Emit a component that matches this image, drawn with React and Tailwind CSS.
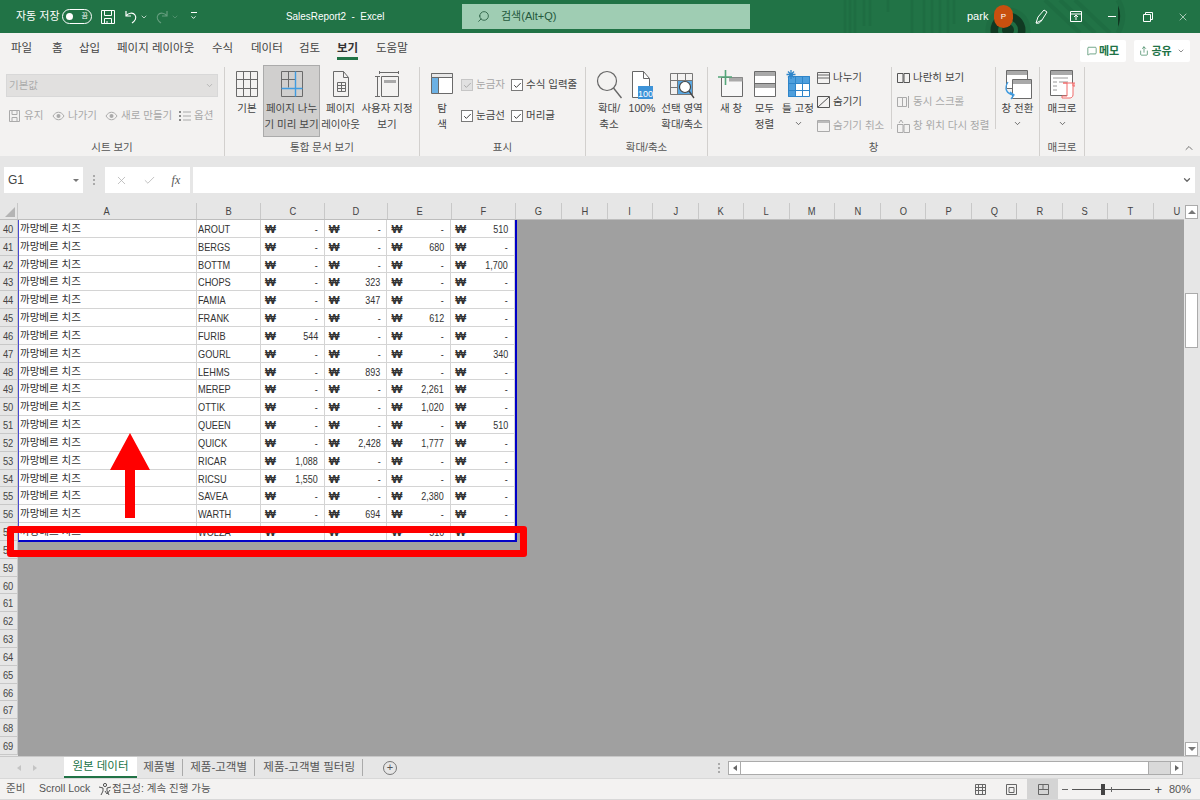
import { ChevronDown, ChevronUp, Search, X, Check, MessageSquare, Share } from "lucide-react";

const KR = "font-['Liberation_Sans','Noto_Sans_CJK_KR','Noto_Sans',sans-serif]";

const tabs = [
  ["파일", 41], ["홈", 27], ["삽입", 38], ["페이지 레이아웃", 95], ["수식", 39],
  ["데이터", 48], ["검토", 38], ["보기", 39], ["도움말", 31],
];
const columns = [
  ["A", 179], ["B", 64], ["C", 64], ["D", 63], ["E", 64], ["F", 64],
  ["G", 46], ["H", 46], ["I", 45], ["J", 46], ["K", 45], ["L", 46], ["M", 45], ["N", 46],
  ["O", 45], ["P", 46], ["Q", 45], ["R", 46], ["S", 45], ["T", 46], ["U", 46],
];
const rows = [
  ["AROUT", "-", "-", "-", "510"],
  ["BERGS", "-", "-", "680", "-"],
  ["BOTTM", "-", "-", "-", "1,700"],
  ["CHOPS", "-", "323", "-", "-"],
  ["FAMIA", "-", "347", "-", "-"],
  ["FRANK", "-", "-", "612", "-"],
  ["FURIB", "544", "-", "-", "-"],
  ["GOURL", "-", "-", "-", "340"],
  ["LEHMS", "-", "893", "-", "-"],
  ["MEREP", "-", "-", "2,261", "-"],
  ["OTTIK", "-", "-", "1,020", "-"],
  ["QUEEN", "-", "-", "-", "510"],
  ["QUICK", "-", "2,428", "1,777", "-"],
  ["RICAR", "1,088", "-", "-", "-"],
  ["RICSU", "1,550", "-", "-", "-"],
  ["SAVEA", "-", "-", "2,380", "-"],
  ["WARTH", "-", "694", "-", "-"],
  ["WOLZA", "", "", "510", ""],
];
const rowNumbers = Array.from({ length: 30 }, (_, i) => 40 + i);

const Icon = ({ w = 32, h = 32, className = "", children }) => (
  <svg width={w} height={h} viewBox={`0 0 ${w} ${h}`} fill="none" className={`shrink-0 ${className}`}>
    {children}
  </svg>
);

function BigButton({ width, icon, label, active, chevron }) {
  return (
    <div
      className={`flex h-[72px] flex-col items-center text-[10.5px] leading-[16px] text-[#444] ${
        active ? "-mt-[2px] border border-[#ababab] bg-[#d0cfce] pt-[4px]" : "pt-[3px]"
      }`}
      style={{ width }}
    >
      <div className="flex h-[28px] items-start justify-center">{icon}</div>
      <div className="mt-[2px] text-center whitespace-pre">{label}</div>
      {chevron && <ChevronDown size={9} strokeWidth={2} className="mt-[3px]" />}
    </div>
  );
}

function Group({ width, label, children }) {
  return (
    <div className="flex h-[89px] shrink-0 flex-col border-r border-[#d2d0ce]" style={{ width }}>
      <div className="flex h-[72px] items-start">{children}</div>
      <div className="mt-auto pb-[1px] text-center text-[10.5px] leading-[15px] text-[#555]">{label}</div>
    </div>
  );
}

function CheckItem({ label, disabled }) {
  return (
    <div className={`flex h-[16px] items-center gap-[3px] text-[10.5px] whitespace-nowrap ${disabled ? "text-[#a6a6a6]" : "text-[#444]"}`}>
      <span
        className={`flex h-[12px] w-[12px] items-center justify-center border ${
          disabled ? "border-[#c6c6c6] bg-[#e1e1e1]" : "border-[#7a7a7a] bg-white"
        }`}
      >
        <Check size={9} strokeWidth={2.5} color={disabled ? "#a6a6a6" : "#333"} />
      </span>
      {label}
    </div>
  );
}

function SmallItem({ icon, label, disabled, className = "" }) {
  return (
    <div className={`flex h-[22px] items-center gap-[3px] text-[10.5px] whitespace-nowrap ${disabled ? "text-[#a8a8a8]" : "text-[#444]"} ${className}`}>
      {icon}
      {label}
    </div>
  );
}

const GridIcon = () => (
  <Icon w={24} h={28}>
    <path d="M1.5 1.5h21v25h-21zM8.5 1.5v25M15.5 1.5v25M1.5 9.5h21M1.5 18.5h21" stroke="#6a6a6a" />
  </Icon>
);
const BreakIcon = () => (
  <Icon w={24} h={28}>
    <path d="M1.5 1.5h21v25h-21zM8.5 1.5v16M1.5 9.5h14" stroke="#6a6a6a" />
    <path d="M15.5 1.5v25M1.5 18.5h21" stroke="#3f9be0" strokeWidth="1.4" />
  </Icon>
);
const PageIcon = () => (
  <Icon w={20} h={28}>
    <path d="M2.5 1.5h10l5 6v19h-15zM12.5 1.5v6h5" stroke="#6a6a6a" />
    <path d="M6.5 12.5h8v9h-8zM6.5 15.5h8M6.5 18.5h8M10.5 12.5v9" stroke="#6a6a6a" />
  </Icon>
);
const CustomViewIcon = () => (
  <Icon w={26} h={28}>
    <path d="M5.5 1v3M24.5 1v3M6 2.5h18M1 6.5h5M1 26.5h5M3.5 6.5v20" stroke="#6a6a6a" />
    <path d="M7.5 6.5h17v20h-17z" stroke="#6a6a6a" />
    <path d="M10 10h12v3H10z" fill="#a9a9a9" />
  </Icon>
);
const NavIcon = () => (
  <Icon w={24} h={26}>
    <path d="M1.5 3.5h21v20h-21z" stroke="#6a6a6a" fill="#fff" />
    <path d="M1.5 3.5h21v4h-21z" stroke="#6a6a6a" fill="#e8e8e8" />
    <path d="M2 8h6v15H2z" fill="#6cb1e4" />
    <path d="M8.5 8v15" stroke="#6a6a6a" />
  </Icon>
);
const ZoomIcon = () => (
  <Icon w={26} h={30}>
    <circle cx="11" cy="11" r="9.5" stroke="#666" strokeWidth="1.2" />
    <path d="M17.5 18l8 10" stroke="#666" strokeWidth="1.4" />
  </Icon>
);
const HundredIcon = () => (
  <Icon w={26} h={30}>
    <path d="M3.5 1.5h11l6 7v19h-17z" stroke="#666" fill="#fff" />
    <path d="M14.5 1.5v7h6" stroke="#666" />
    <rect x="9" y="16" width="15" height="13" fill="#3d93d8" />
    <text x="16.5" y="26.5" textAnchor="middle" fontSize="9" fill="#fff" fontFamily="Liberation Sans">100</text>
  </Icon>
);
const SelectionZoomIcon = () => (
  <Icon w={26} h={30}>
    <path d="M1.5 3.5h22v21h-22zM1.5 10.5h22M1.5 17.5h22M8.5 3.5v21M16.5 3.5v21" stroke="#777" />
    <path d="M9 11h14v13H9z" fill="#5aa8e2" />
    <circle cx="16" cy="17" r="5.5" stroke="#444" strokeWidth="1.2" fill="#fff" />
    <path d="M20 21l5 7" stroke="#444" strokeWidth="1.3" />
  </Icon>
);
const NewWindowIcon = () => (
  <Icon w={26} h={28}>
    <path d="M3.5 7.5h21v19h-21z" stroke="#6a6a6a" fill="#f7f7f7" />
    <path d="M11 7.5h13.5v4H11z" fill="#a9a9a9" />
    <path d="M7.5 0v15M0 7h14" stroke="#54a679" strokeWidth="1.6" />
  </Icon>
);
const ArrangeIcon = () => (
  <Icon w={24} h={28}>
    <path d="M1.5 1.5h21v25h-21z" stroke="#6a6a6a" fill="#fff" />
    <path d="M2 2h20v4H2zM2 14h20v4H2z" fill="#a9a9a9" />
    <path d="M1.5 13.5h21" stroke="#6a6a6a" />
  </Icon>
);
const FreezeIcon = () => (
  <Icon w={26} h={28}>
    <path d="M3 6h22v21H3z" fill="#fff" />
    <path d="M3 6h22v7H3zM3 13h7v14H3z" fill="#4e9fdd" />
    <path d="M3.5 6.5h21v20h-21zM3.5 13.5h21M3.5 20.5h21M10.5 6.5v20M17.5 6.5v20" stroke="#2f85c9" />
    <path d="M6 0v9M1.5 4.5h9M3 1.5l6 6M9 1.5l-6 6" stroke="#2f85c9" strokeWidth="1.3" />
  </Icon>
);
const SwitchIcon = () => (
  <Icon w={30} h={30}>
    <path d="M3.5 0.5h21v18h-21z" stroke="#6a6a6a" fill="#fff" />
    <path d="M4 1h20v4H4z" fill="#a9a9a9" />
    <path d="M9.5 9.5h19v19h-19z" stroke="#6a6a6a" fill="#fff" />
    <path d="M10 10h18v4H10z" fill="#a9a9a9" />
    <path d="M5 12c-4 6-2 12 6 13M7 22l4 3-3 4" stroke="#3f9be0" strokeWidth="1.3" />
  </Icon>
);
const MacroIcon = () => (
  <Icon w={26} h={30}>
    <path d="M1.5 0.5h22v25h-22z" stroke="#6a6a6a" fill="#fff" />
    <path d="M2 1h21v4H2z" fill="#a9a9a9" />
    <path d="M4 8h15M4 12h4M10 12h9M4 16h4M4 20h4" stroke="#9a9a9a" />
    <path d="M14 13h10v12c0 2-2 3-3 3h-8v-2h5V13zM24 13v3h2v-3z" stroke="#f16a6a" fill="#fff" />
  </Icon>
);
const SmallBox = ({ children }) => (
  <Icon w={13} h={14}>
    {children}
  </Icon>
);

function Ribbon() {
  return (
    <div className="flex h-[91px] bg-[#f3f2f1] pt-[2px] text-[#444]">
      <Group width={225} label="시트 보기">
        <div className="flex w-full flex-col pl-[6px] pt-[7px]">
          <div className="flex h-[23px] w-[212px] items-center justify-between border border-[#d8d8d8] bg-[#e1e0df] pl-[2px] pr-[3px] text-[10.5px] text-[#acacac]">
            기본값
            <ChevronDown size={9} strokeWidth={2} color="#aaa" />
          </div>
          <div className="mt-[8px] flex pl-[2px]">
            <SmallItem className="w-[44px]" disabled label="유지" icon={<SmallBox><path d="M1.5 1.5h10v11h-10zM4 1.5v4h5v-4M4 12.5v-4h5v4" stroke="#aaa" /></SmallBox>} />
            <SmallItem className="w-[53px]" disabled label="나가기" icon={<SmallBox><path d="M1 7c3-5 8-5 11 0-3 5-8 5-11 0z" stroke="#aaa" /><circle cx="6.5" cy="7" r="2" fill="#aaa" /></SmallBox>} />
            <SmallItem className="w-[73px]" disabled label="새로 만들기" icon={<SmallBox><path d="M1 7c3-5 8-5 11 0-3 5-8 5-11 0z" stroke="#aaa" /><circle cx="6.5" cy="7" r="2" fill="#aaa" /></SmallBox>} />
            <SmallItem disabled label="옵션" icon={<SmallBox><path d="M5 3h8M5 7h8M5 11h8" stroke="#aaa" /><path d="M1 2h2v2H1zM1 6h2v2H1zM1 10h2v2H1z" fill="#888" /></SmallBox>} />
          </div>
        </div>
      </Group>
      <Group width={195} label="통합 문서 보기">
        <div className="flex pl-[6px]">
          <BigButton width={32} icon={<GridIcon />} label="기본" />
          <BigButton width={57} active icon={<BreakIcon />} label={"페이지 나누\n기 미리 보기"} />
          <BigButton width={41} icon={<PageIcon />} label={"페이지\n레이아웃"} />
          <BigButton width={52} icon={<CustomViewIcon />} label={"사용자 지정\n보기"} />
        </div>
      </Group>
      <Group width={166} label="표시">
        <div className="flex pl-[10px]">
          <BigButton width={24} icon={<NavIcon />} label={"탐\n색"} />
          <div className="ml-[7px] flex w-[50px] flex-col gap-[15px] pt-[10px]">
            <CheckItem disabled label="눈금자" />
            <CheckItem label="눈금선" />
          </div>
          <div className="flex flex-col gap-[15px] pt-[10px]">
            <CheckItem label="수식 입력줄" />
            <CheckItem label="머리글" />
          </div>
        </div>
      </Group>
      <Group width={122} label="확대/축소">
        <div className="flex pl-[8px]">
          <BigButton width={30} icon={<ZoomIcon />} label={"확대/\n축소"} />
          <BigButton width={36} icon={<HundredIcon />} label="100%" />
          <BigButton width={44} icon={<SelectionZoomIcon />} label={"선택 영역\n확대/축소"} />
        </div>
      </Group>
      <Group width={332} label="창">
        <div className="flex pl-[6px]">
          <BigButton width={34} icon={<NewWindowIcon />} label="새 창" />
          <BigButton width={33} icon={<ArrangeIcon />} label={"모두\n정렬"} />
          <BigButton width={34} icon={<FreezeIcon />} label="틀 고정" chevron />
          <div className="ml-[2px] flex w-[73px] flex-col">
            <SmallItem label="나누기" icon={<SmallBox><path d="M.5 1.5h12v11H.5zM.5 7h12M.5 4h12" stroke="#666" /></SmallBox>} />
            <SmallItem className="mt-[2px]" label="숨기기" icon={<SmallBox><path d="M.5 1.5h12v11H.5zM1 12L12 2" stroke="#555" /></SmallBox>} />
            <SmallItem className="mt-[2px]" disabled label="숨기기 취소" icon={<SmallBox><path d="M.5 1.5h12v11H.5z" stroke="#aaa" /><path d="M1 2h11v2H1z" fill="#bbb" /></SmallBox>} />
          </div>
          <div className="ml-[1px] h-[62px] w-px bg-[#d2d0ce]" />
          <div className="ml-[5px] flex w-[98px] flex-col">
            <SmallItem label="나란히 보기" icon={<SmallBox><path d="M.5 2.5h5.5v9H.5zM7 2.5h5.5v9H7z" stroke="#555" /></SmallBox>} />
            <SmallItem className="mt-[2px]" disabled label="동시 스크롤" icon={<SmallBox><path d="M.5 2.5h5v9h-5zM5.5 2.5h4v9h-4zM11.5 1v12" stroke="#aaa" /></SmallBox>} />
            <SmallItem className="mt-[2px]" disabled label="창 위치 다시 정렬" icon={<SmallBox><path d="M.5 5.5h5.5v8H.5zM7 5.5h5.5v8H7zM2 4l2-3 2 3" stroke="#aaa" /></SmallBox>} />
          </div>
          <div className="h-[62px] w-px bg-[#d2d0ce]" />
          <BigButton width={43} icon={<SwitchIcon />} label="창 전환" chevron />
        </div>
      </Group>
      <Group width={45} label="매크로">
        <BigButton width={44} icon={<MacroIcon />} label="매크로" chevron />
      </Group>
      <div className="flex flex-1 items-end justify-end pb-[2px] pr-[5px]">
        <ChevronUp size={12} strokeWidth={1.6} color="#555" />
      </div>
    </div>
  );
}

function TitleBar() {
  return (
    <div className="relative flex h-[33px] items-center overflow-hidden bg-[#217346] text-[11px] text-white">
      <svg width="320" height="33" className="absolute left-[840px] top-0 opacity-50">
        <path d="M5 33V0M10 33V0M15 33V0M24 0v26M30 0v26M48 0v12M72 33V0M84 33V0M92 33V0M100 33V0M108 33V0M114 0v24" stroke="#1d6840" strokeWidth="2.5" />
        <circle cx="168" cy="30" r="20" stroke="#1d6840" strokeWidth="5" />
        <circle cx="168" cy="30" r="8" stroke="#1d6840" strokeWidth="4" />
        <path d="M205 0L240 33M220 0L255 33M235 0L270 33" stroke="#1d6840" strokeWidth="4" />
        <path d="M278 0c6 10 6 22 0 33" stroke="#1d6840" strokeWidth="5" />
      </svg>
      <span className="relative ml-[16px] w-[46px]">자동 저장</span>
      <div className="relative flex h-[15px] w-[30px] items-center justify-between rounded-full border border-white pl-[3px] pr-[3px] text-[7px]">
        <span className="h-[7px] w-[7px] rounded-full bg-white" />끔
      </div>
      <Icon w={16} h={16} className="relative ml-[8px]">
        <path d="M1.5 1.5h13v13h-13zM4.5 1.5v5h7v-5M4.5 14.5v-5h7v5M7 12v2" stroke="#fff" />
      </Icon>
      <Icon w={14} h={14} className="relative ml-[8px]">
        <path d="M2 1v5h5M2 6c2-3 7-4 9-1s0 6-3 8" stroke="#fff" strokeWidth="1.2" />
      </Icon>
      <ChevronDown size={8} className="relative ml-[2px]" />
      <Icon w={14} h={14} className="relative ml-[7px] opacity-30">
        <path d="M12 1v5H7M12 6C10 3 5 2 3 5s0 6 3 8" stroke="#fff" strokeWidth="1.2" />
      </Icon>
      <ChevronDown size={8} className="relative ml-[2px] opacity-30" />
      <div className="relative ml-[11px] flex flex-col items-center gap-[1px]">
        <span className="h-px w-[6px] bg-white" />
        <ChevronDown size={7} strokeWidth={3} />
      </div>
      <span className="relative ml-[89px] inline-block w-[92px] origin-left scale-x-[0.9] whitespace-pre">{"SalesReport2  -  Excel"}</span>
      <div className="relative ml-[84px] flex h-[25px] w-[288px] items-center bg-[#9fcdb3] pl-[15px] text-[#24593c]">
        <Search size={13} className="-scale-x-100" strokeWidth={1.5} />
        <span className="ml-[11px]">검색(Alt+Q)</span>
      </div>
      <span className="relative ml-[217px] w-[27px]">park</span>
      <div className="relative flex h-[23px] w-[19px] items-center justify-center rounded-full bg-[#c8500f] text-[8px]">P</div>
      <Icon w={16} h={16} className="relative ml-[21px]">
        <path d="M2 14l2-6 6-7 3 2-5 8zM2 14c2 1 4 0 6-3" stroke="#fff" />
      </Icon>
      <Icon w={12} h={11} className="relative ml-[20px]">
        <path d="M.5.5h11v10H.5zM.5 3h11M6 9V4.5M4 6l2-2 2 2" stroke="#fff" />
      </Icon>
      <span className="relative ml-[26px] h-px w-[8px] bg-white" />
      <Icon w={10} h={10} className="relative ml-[27px]">
        <path d="M.5 2.5h7v7h-7zM2.5 2.5v-2h7v7h-2" stroke="#fff" />
      </Icon>
      <X size={12} strokeWidth={1.2} className="relative ml-[24px]" />
    </div>
  );
}

function TabBar() {
  return (
    <div className="flex h-[32px] items-center bg-[#f3f2f1] pl-[11px] text-[11.5px] text-[#444]">
      <div className="flex">
        {tabs.map(([tab, width]) => (
          <span key={tab} className="shrink-0 whitespace-nowrap" style={{ width }}>
            <span className={`relative ${tab === "보기" ? "font-bold text-[#333]" : ""}`}>
              {tab}
              {tab === "보기" && <span className="absolute -bottom-[6px] left-0 right-0 h-[3px] bg-[#217346]" />}
            </span>
          </span>
        ))}
      </div>
      <div className="ml-auto mr-[10px] mt-[4px] flex gap-[8px] font-bold text-[#217346]">
        <div className="flex h-[22px] w-[46px] items-center justify-center gap-[2px] rounded-[2px] bg-white text-[11px]">
          <MessageSquare size={10} strokeWidth={1.5} />
          메모
        </div>
        <div className="flex h-[22px] w-[56px] items-center justify-center gap-[2px] rounded-[2px] bg-white text-[11px]">
          <Share size={10} strokeWidth={1.5} />
          공유
          <ChevronDown size={8} color="#555" className="ml-[3px]" />
        </div>
      </div>
    </div>
  );
}

function FormulaBar() {
  return (
    <div className="flex h-[47px] shrink-0 items-start bg-[#e6e6e6] pt-[11px]">
      <div className="ml-[4px] flex h-[26px] w-[79px] items-center justify-between bg-white pl-[4px] pr-[4px] text-[12px] text-[#444]">
        G1
        <span className="border-x-[3px] border-t-[3px] border-x-transparent border-t-[#777]" />
      </div>
      <div className="ml-[10px] mt-[8px] flex flex-col gap-[2px]">
        <span className="h-[2px] w-[2px] bg-[#aaa]" />
        <span className="h-[2px] w-[2px] bg-[#aaa]" />
        <span className="h-[2px] w-[2px] bg-[#aaa]" />
      </div>
      <div className="ml-[10px] flex h-[26px] w-[85px] items-center justify-around bg-white px-[2px] text-[#b5b5b5]">
        <X size={13} strokeWidth={1.5} />
        <Check size={13} strokeWidth={1.5} />
        <span className="font-['Liberation_Serif',serif] text-[12px] italic text-[#555]">fx</span>
      </div>
      <div className="ml-[3px] flex h-[26px] w-[1002px] items-center justify-end bg-white pr-[3px]">
        <ChevronDown size={10} strokeWidth={3} color="#666" />
      </div>
    </div>
  );
}

function SheetRow({ row, number }) {
  return (
    <div className="flex h-[17.83px] text-[11.5px] text-[#333]">
      <div className="w-[179px] border-b border-r border-[#d4d4d4] pl-[1px] text-[10.5px] leading-[16px] whitespace-nowrap">까망베르 치즈</div>
      <div className="w-[64px] border-b border-r border-[#d4d4d4] pl-[1px] leading-[19px]">
        <span className="inline-block origin-left scale-x-[0.8]">{row[0]}</span>
      </div>
      {row.slice(1).map((value, i) => (
        <div
          key={`${number}-${i}`}
          className={`flex justify-between border-b border-r border-[#d4d4d4] pl-[4px] pr-[6px] leading-[19px] ${i === 1 ? "w-[63px]" : "w-[64px]"}`}
        >
          <span className="font-semibold">₩</span>
          <span className="inline-block origin-right scale-x-[0.78]">{value}</span>
        </div>
      ))}
    </div>
  );
}

function Sheet() {
  return (
    <div className={`flex min-h-0 flex-1 bg-[#e6e6e6] text-[11px] ${KR}`}>
      <div className="flex min-w-0 flex-1 flex-col overflow-hidden">
        <div className="flex h-[16px] shrink-0 text-[#444]">
          <div className="relative h-full w-[18px] shrink-0 border-r border-[#c8c8c8]">
            <span className="absolute bottom-[2px] right-[2px] border-b-[10px] border-l-[10px] border-b-[#b4b4b4] border-l-transparent" />
          </div>
          {columns.map(([name, width]) => (
            <div
              key={name}
              className="shrink-0 border-r border-[#c8c8c8] text-center leading-[16px]"
              style={{ width }}
            >
              <span className="inline-block scale-x-[0.85]">{name}</span>
            </div>
          ))}
        </div>
        <div className="flex min-h-0 flex-1 border-t border-[#bdbdbd]">
          <div className="w-[18px] shrink-0 overflow-hidden text-[#444]">
            {rowNumbers.map((number) => (
              <div key={number} className="h-[17.83px] border-b border-r border-[#c8c8c8] text-center leading-[19px]">
                <span className="inline-block scale-x-[0.85]">{number}</span>
              </div>
            ))}
          </div>
          <div className="relative min-w-0 flex-1 bg-[#a0a0a0]">
            <div className="h-[322px] w-[499px] overflow-hidden border-b-2 border-l border-r-2 border-b-[#0000c8] border-l-[#4a4ad0] border-r-[#0000c8] bg-white">
              {rows.map((row, i) => (
                <SheetRow key={row[0]} row={row} number={40 + i} />
              ))}
            </div>
            {/* annotation drawn on top of the sheet */}
            <div className="absolute -left-[11px] top-[306px] h-[31px] w-[520px] rounded-[3px] border-[7px] border-[#ff0000]" />
            <svg width="40" height="86" className="absolute left-[92px] top-[213px]">
              <path d="M20 0L40 37H25V85H15V37H0z" fill="#ff0000" />
            </svg>
          </div>
        </div>
      </div>
      <div className="ml-[1px] mr-[2px] flex w-[13px] shrink-0 flex-col pt-[2px]">
        <div className="flex h-[14px] items-center justify-center border border-[#ababab] bg-white">
          <span className="border-x-[4px] border-b-[4px] border-x-transparent border-b-[#777]" />
        </div>
        <div className="mt-[74px] h-[55px] border border-[#ababab] bg-white" />
        <div className="mt-auto flex h-[14px] items-center justify-center border border-[#ababab] bg-white">
          <span className="border-x-[4px] border-t-[4px] border-x-transparent border-t-[#777]" />
        </div>
      </div>
    </div>
  );
}

function SheetTabs() {
  return (
    <div className={`flex h-[22px] shrink-0 items-center border-t border-[#c8c8c8] bg-[#e6e6e6] text-[11.5px] whitespace-nowrap text-[#555] ${KR}`}>
      <div className="flex w-[64px] gap-[12px] pl-[17px]">
        <span className="border-y-[3px] border-r-[4px] border-y-transparent border-r-[#c4c4c4]" />
        <span className="border-y-[3px] border-l-[4px] border-y-transparent border-l-[#c4c4c4]" />
      </div>
      <div className="flex h-full w-[73px] items-center justify-center border-b-2 border-[#217346] bg-white text-[#217346]">원본 데이터</div>
      <div className="w-[46px] border-r border-[#aaa] pr-[7px] text-right">제품별</div>
      <div className="w-[72px] border-r border-[#aaa] pr-[7px] text-right">제품-고객별</div>
      <div className="w-[108px] border-r border-[#aaa] pr-[7px] text-right">제품-고객별 필터링</div>
      <div className="ml-[20px] flex h-[14px] w-[14px] items-center justify-center rounded-full border border-[#777] text-[11px] leading-none">+</div>
      <div className="ml-[321px] flex flex-col gap-[2px]">
        <span className="h-[2px] w-[2px] bg-[#aaa]" />
        <span className="h-[2px] w-[2px] bg-[#aaa]" />
        <span className="h-[2px] w-[2px] bg-[#aaa]" />
      </div>
      <div className="ml-[8px] flex h-[14px] w-[455px] border border-[#ababab] bg-[#d9d9d9]">
        <div className="flex w-[11px] items-center justify-center bg-white">
          <span className="border-y-[3px] border-r-[4px] border-y-transparent border-r-[#666]" />
        </div>
        <div className="w-[409px] border-x border-[#ababab] bg-white" />
        <div className="ml-auto flex w-[12px] items-center justify-center border-l border-[#ababab] bg-white">
          <span className="border-y-[3px] border-l-[4px] border-y-transparent border-l-[#666]" />
        </div>
      </div>
    </div>
  );
}

function StatusBar() {
  return (
    <div className={`flex h-[22px] shrink-0 items-center border-y border-[#d8d8d8] bg-[#f3f2f1] pl-[6px] text-[10.5px] whitespace-nowrap text-[#555] ${KR}`}>
      <span className="w-[33px]">준비</span>
      <span className="w-[59px]">Scroll Lock</span>
      <Icon w={14} h={14}>
        <circle cx="7" cy="3" r="1.6" stroke="#555" />
        <path d="M1 5l4 1v3l-2 4M13 5L9 6v3l2 4" stroke="#555" />
        <path d="M7 9l2 3 3-4" stroke="#555" />
      </Icon>
      접근성: 계속 진행 가능
      <div className="ml-auto flex items-center pr-[11px]">
        <Icon w={14} h={14}>
          <path d="M2.5 2.5h10v10h-10zM2.5 5.5h10M2.5 8.5h10M5.5 2.5v10M9.5 2.5v10" stroke="#666" />
        </Icon>
        <Icon w={14} h={14} className="ml-[17px]">
          <path d="M2.5 2.5h10v10h-10zM5 5.5h5v5H5z" stroke="#666" />
        </Icon>
        <div className="ml-[9px] flex h-[20px] w-[31px] items-center justify-center bg-[#d4d4d4]">
          <Icon w={14} h={14}>
            <path d="M2.5 2.5h10v10h-10zM7 2.5v5H2.5M7 7.5h5.5" stroke="#666" />
          </Icon>
        </div>
        <span className="ml-[4px] h-px w-[6px] bg-[#666]" />
        <div className="relative ml-[4px] h-px w-[78px] bg-[#555]">
          <span className="absolute -top-[5px] left-[29px] h-[11px] w-[4px] bg-[#444]" />
          <span className="absolute -top-[2px] left-[39px] h-[5px] w-px bg-[#666]" />
        </div>
        <span className="ml-[4px] text-[13px] leading-none">+</span>
        <span className="ml-[7px] w-[20px] text-[11px]">80%</span>
      </div>
    </div>
  );
}

export default function App() {
  return (
    <div className={`flex h-[800px] w-[1200px] flex-col overflow-hidden bg-[#e6e6e6] ${KR}`}>
      <TitleBar />
      <TabBar />
      <Ribbon />
      <FormulaBar />
      <Sheet />
      <SheetTabs />
      <StatusBar />
    </div>
  );
}
